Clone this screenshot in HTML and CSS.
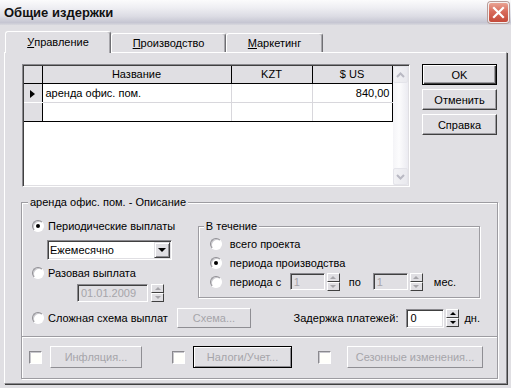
FILE: index.html
```html
<!DOCTYPE html>
<html lang="ru">
<head>
    <meta charset="UTF-8">
    <title>Общие издержки</title>
    <link rel="stylesheet" href="styles.css">
</head>
<body>
<div class="window">
    <div class="caption">
        <span class="caption-text">Общие издержки</span>
        <span class="close-btn">
            <svg width="13" height="13" viewBox="0 0 13 13"><path d="M2 2 L11 11 M11 2 L2 11" stroke="#fff" stroke-width="2.2" stroke-linecap="square"/></svg>
        </span>
    </div>
    <div class="client">
        <div class="tabs">
            <div class="tab active tab-1"><u>У</u>правление</div>
            <div class="tab tab-2"><u>П</u>роизводство</div>
            <div class="tab tab-3"><u>М</u>аркетинг</div>
        </div>
        <div class="page">
            <div class="top-row">
                <div class="grid">
                    <table class="sheet">
                        <colgroup>
                            <col class="c-ind"><col class="c-name"><col class="c-kzt"><col class="c-usd">
                        </colgroup>
                        <tr class="head"><th></th><th>Название</th><th>KZT</th><th>$ US</th></tr>
                        <tr><td class="ind"><span class="cur"></span></td><td class="txt">аренда офис. пом.</td><td></td><td class="num">840,00</td></tr>
                        <tr class="last"><td class="ind"></td><td></td><td></td><td></td></tr>
                    </table>
                    <div class="vscroll">
                        <span class="sb-btn"><svg width="9" height="6" viewBox="0 0 9 6"><path d="M1 5 L4.5 1.5 L8 5" fill="none" stroke="#b9b9c3" stroke-width="2"/></svg></span>
                        <span class="sb-track"></span>
                        <span class="sb-btn"><svg width="9" height="6" viewBox="0 0 9 6"><path d="M1 1 L4.5 4.5 L8 1" fill="none" stroke="#b9b9c3" stroke-width="2"/></svg></span>
                    </div>
                </div>
                <div class="cmd-buttons">
                    <div class="btn default">OK</div>
                    <div class="btn">Отменить</div>
                    <div class="btn">Справка</div>
                </div>
            </div>

            <fieldset class="group desc">
                <legend>аренда офис. пом. - Описание</legend>
                <div class="desc-main">
                    <div class="pay-col">
                        <div class="opt"><span class="radio on"></span>Периодические выплаты</div>
                        <div class="combo">
                            <span class="combo-text">Ежемесячно</span>
                            <span class="combo-btn"><span class="tri-down"></span></span>
                        </div>
                        <div class="opt opt-2"><span class="radio"></span>Разовая выплата</div>
                        <div class="date-row">
                            <span class="field disabled date">01.01.2009</span>
                            <span class="spin off"><span><i class="up"></i></span><span><i class="down"></i></span></span>
                        </div>
                    </div>
                    <fieldset class="group period">
                        <legend>В течение</legend>
                        <div class="opt"><span class="radio"></span>всего проекта</div>
                        <div class="opt"><span class="radio on"></span>периода производства</div>
                        <div class="opt">
                            <span class="radio"></span><span class="lbl-from">периода с</span>
                            <span class="field disabled small">1</span>
                            <span class="spin off"><span><i class="up"></i></span><span><i class="down"></i></span></span>
                            <span class="lbl-to">по</span>
                            <span class="field disabled small">1</span>
                            <span class="spin off"><span><i class="up"></i></span><span><i class="down"></i></span></span>
                            <span class="lbl-unit">мес.</span>
                        </div>
                    </fieldset>
                </div>
                <div class="desc-bottom">
                    <div class="opt complex"><span class="radio"></span>Сложная схема выплат</div>
                    <div class="btn disabled scheme">Схема...</div>
                    <div class="delay">
                        <span>Задержка платежей:</span>
                        <span class="field delay-field">0</span>
                        <span class="spin"><span><i class="up"></i></span><span><i class="down"></i></span></span>
                        <span class="lbl-days">дн.</span>
                    </div>
                </div>
            </fieldset>

            <fieldset class="group extras">
                <span class="check"></span>
                <div class="btn disabled w-infl">Инфляция...</div>
                <span class="check cb-2"></span>
                <div class="btn disabled focus w-tax">Налоги/Учет...</div>
                <span class="check cb-3"></span>
                <div class="btn disabled w-season">Сезонные изменения...</div>
            </fieldset>
        </div>
    </div>
</div>
</body>
</html>
```

FILE: styles.css
```css
* {
    box-sizing: border-box;
}
body {
    margin: 0;
    background: #e0dfe3;
    font-family: "Liberation Sans", Arial, sans-serif;
    font-size: 11px;
    color: #000;
}
.window {
    width: 511px;
    height: 388px;
    background: #e0dfe3;
    overflow: hidden;
}

/* title bar */
.caption {
    height: 25px;
    display: flex;
    align-items: center;
    justify-content: space-between;
    padding: 0 2px 0 4px;
    background: linear-gradient(to bottom, #fbfbfc 0%, #efeff3 30%, #dcdce4 65%, #c6c6d2 90%, #d8d8de 100%);
}
.caption-text {
    font-size: 13px;
    font-weight: bold;
    color: #111;
}
.close-btn {
    width: 21px;
    height: 21px;
    display: flex;
    align-items: center;
    justify-content: center;
    border: 1px solid #f4f0f0;
    border-radius: 3px;
    background: linear-gradient(to bottom, #e9a394 0%, #d86c5c 45%, #c44a3a 100%);
    box-shadow: 0 0 0 1px #b89c98;
}

/* tabs */
.client {
    padding: 6px 4px 0 4px;
}
.tabs {
    display: flex;
    align-items: flex-end;
    height: 21px;
    padding-left: 1px;
    position: relative;
    z-index: 1;
}
.tab {
    height: 19px;
    display: flex;
    align-items: center;
    justify-content: center;
    background: #e0dfe3;
    border: 1px solid;
    border-bottom: none;
    border-color: #fff #6f6f73 transparent #fff;
    border-radius: 3px 3px 0 0;
    box-shadow: inset -1px 0 0 #a7a6ab;
}
.tab.active {
    height: 22px;
    margin-bottom: -1px;
    padding-bottom: 1px;
}
.tab-1 { width: 106px; }
.tab-2 { width: 115px; }
.tab-3 { width: 97px; }

.page {
    width: 503px;
    border: 1px solid;
    border-color: #fff #8a898e #8a898e #fff;
    box-shadow: 1px 1px 0 #404040;
    padding: 11px 0 4px 17px;
}

/* grid + command buttons */
.top-row {
    display: flex;
    align-items: flex-start;
}
.grid {
    width: 388px;
    height: 123px;
    display: flex;
    justify-content: space-between;
    background: #fff;
    border: 1px solid;
    border-color: #8a898e #fff #fff #8a898e;
    box-shadow: inset 1px 1px 0 #404040, inset -1px -1px 0 #e0dfe3;
    padding: 1px;
    margin-right: 12px;
}
.sheet {
    width: 368px;
    table-layout: fixed;
    border-collapse: collapse;
    align-self: flex-start;
}
.c-ind { width: 18px; }
.c-name { width: 189px; }
.c-kzt { width: 81px; }
.c-usd { width: 80px; }
.sheet th {
    height: 17px;
    padding: 0;
    font-weight: normal;
    background: #e0dfe3;
    border-right: 1px solid #000;
    border-bottom: 1px solid #000;
}
.sheet td {
    height: 19px;
    padding: 0 2px 0 3px;
    border-right: 1px solid #d8d7dc;
    border-bottom: 1px solid #d8d7dc;
    white-space: nowrap;
}
.sheet td:last-child {
    border-right-color: #000;
}
.sheet td.ind {
    background: #e0dfe3;
    border-right-color: #000;
    border-bottom-color: #fff;
    text-align: center;
    padding: 0;
}
.sheet tr.last td {
    border-bottom-color: #000;
}
.sheet .num {
    text-align: right;
}
.cur {
    display: inline-block;
    vertical-align: middle;
    border-left: 5px solid #000;
    border-top: 4px solid transparent;
    border-bottom: 4px solid transparent;
}
.vscroll {
    width: 16px;
    display: flex;
    flex-direction: column;
    background: linear-gradient(to right, #f4f4f7, #fcfcfd 40%, #ebebf1);
}
.sb-btn {
    height: 17px;
    display: flex;
    align-items: center;
    justify-content: center;
    border: 1px solid #e4e4ea;
    border-radius: 2px;
    background: linear-gradient(to right, #f2f2f5, #e9e9ee);
}
.sb-track {
    flex: 1;
}
.cmd-buttons {
    width: 75px;
    display: flex;
    flex-direction: column;
    gap: 4px;
}

/* buttons */
.btn {
    height: 21px;
    display: flex;
    align-items: center;
    justify-content: center;
    background: #e0dfe3;
    border: 1px solid;
    border-color: #fff #404040 #404040 #fff;
    box-shadow: inset -1px -1px 0 #9d9ca1;
}
.btn.default {
    border-color: #000;
    box-shadow: inset 1px 1px 0 #fff, inset -1px -1px 0 #404040, inset -2px -2px 0 #9d9ca1;
}
.btn.disabled {
    color: #a6a5aa;
    border-color: #fff #8f8e93 #8f8e93 #fff;
    box-shadow: none;
}
.btn.focus {
    border-color: #000;
    box-shadow: inset 1px 1px 0 #fff, inset -1px -1px 0 #8f8e93;
}

/* group boxes */
fieldset.group {
    margin: 0;
    padding: 0;
    min-width: 0;
    border: 1px solid #9d9ca1;
    box-shadow: inset 1px 1px 0 #fff, 1px 1px 0 #fff;
}
fieldset.group legend {
    padding: 0 2px;
    line-height: 13px;
    background: #e0dfe3;
}
.desc {
    width: 477px;
    margin: 9px 0 0 -1px !important;
    padding: 0 17px 8px 10px !important;
}
.desc > legend {
    margin-left: -4px;
}
.desc-main {
    display: flex;
    align-items: flex-start;
}
.pay-col {
    width: 167px;
    margin-top: 9px;
}
.opt {
    display: flex;
    align-items: center;
    height: 16px;
    white-space: nowrap;
}
.opt .radio {
    margin-right: 4px;
}
.opt-2 {
    margin-top: 5px;
}
.radio {
    position: relative;
    flex: none;
    width: 12px;
    height: 12px;
    border-radius: 50%;
    background: #fff;
    border: 1px solid;
    border-color: #8f8e93 #fff #fff #8f8e93;
    box-shadow: inset 1px 1px 0 #c9c8cd;
}
.radio.on::after {
    content: "";
    position: absolute;
    left: 3px;
    top: 3px;
    width: 4px;
    height: 4px;
    border-radius: 50%;
    background: #000;
}
.combo {
    width: 125px;
    height: 20px;
    margin: 6px 0 0 15px;
    display: flex;
    align-items: center;
    justify-content: space-between;
    background: #fff;
    border: 1px solid;
    border-color: #8a898e #fff #fff #8a898e;
    box-shadow: inset 1px 1px 0 #404040, inset -1px -1px 0 #e0dfe3;
    padding: 1px 1px 1px 2px;
}
.combo-btn {
    width: 16px;
    height: 16px;
    display: flex;
    align-items: center;
    justify-content: center;
    background: #e0dfe3;
    border: 1px solid;
    border-color: #e0dfe3 #404040 #404040 #e0dfe3;
    box-shadow: inset 1px 1px 0 #fff, inset -1px -1px 0 #8f8e93;
}
.tri-down {
    border-top: 4px solid #000;
    border-left: 4px solid transparent;
    border-right: 4px solid transparent;
}
.date-row {
    display: flex;
    align-items: flex-start;
    margin: 3px 0 0 45px;
}
.field {
    height: 17px;
    display: flex;
    align-items: center;
    padding-left: 3px;
    background: #fff;
    border: 1px solid;
    border-color: #8a898e #fff #fff #8a898e;
    box-shadow: inset 1px 1px 0 #404040, inset -1px -1px 0 #e0dfe3;
}
.field.disabled {
    background: #e0dfe3;
    color: #a6a5aa;
}
.field.date {
    width: 71px;
    height: 18px;
    margin-right: 3px;
}
.field.small {
    width: 35px;
    margin-right: 2px;
}

/* spin buttons */
.spin {
    width: 13px;
    height: 18px;
    display: flex;
    flex-direction: column;
    flex: none;
}
.spin > span {
    flex: 1;
    display: flex;
    align-items: center;
    justify-content: center;
    background: #e0dfe3;
    border: 1px solid;
    border-color: #fff #404040 #404040 #fff;
}
.spin i {
    display: block;
    border-left: 3px solid transparent;
    border-right: 3px solid transparent;
}
.spin i.up {
    border-bottom: 3px solid #000;
}
.spin i.down {
    border-top: 3px solid #000;
}
.spin.off i.up {
    border-bottom-color: #a6a5aa;
}
.spin.off i.down {
    border-top-color: #a6a5aa;
}

/* "В течение" */
.period {
    width: 284px;
    margin: 11px 0 0 0 !important;
    padding: 1px 0 6px 11px !important;
}
.period > legend {
    margin-left: -6px;
}
.period .opt {
    height: 19px;
}
.period .opt .radio {
    margin-right: 8px;
}
.lbl-from {
    width: 60px;
}
.lbl-to {
    width: 24px;
    margin-left: 9px;
}
.lbl-unit {
    margin-left: 11px;
}

.desc-bottom {
    display: flex;
    align-items: center;
    height: 20px;
    margin-top: 6px;
}
.complex {
    width: 145px;
}
.btn.scheme {
    width: 74px;
    height: 20px;
}
.delay {
    margin-left: auto;
    display: flex;
    align-items: center;
}
.delay-field {
    width: 38px;
    height: 19px;
    margin: 0 2px 0 8px;
}
.lbl-days {
    margin-left: 5px;
}

/* bottom checkboxes */
.extras {
    width: 477px;
    display: flex;
    align-items: center;
    margin: -1px 0 0 -1px !important;
    padding: 9px 0 10px 7px !important;
}
.check {
    width: 13px;
    height: 13px;
    flex: none;
    background: #fffffb;
    border: 1px solid;
    border-color: #8a898e #fff #fff #8a898e;
    box-shadow: inset 1px 1px 0 #c9c8cd;
}
.extras .btn {
    height: 22px;
    margin-left: 8px;
}
.w-infl { width: 92px; }
.w-tax { width: 99px; }
.w-season { width: 136px; margin-left: 16px !important; }
.cb-2 { margin-left: 30px; }
.cb-3 { margin-left: 26px; }
```
